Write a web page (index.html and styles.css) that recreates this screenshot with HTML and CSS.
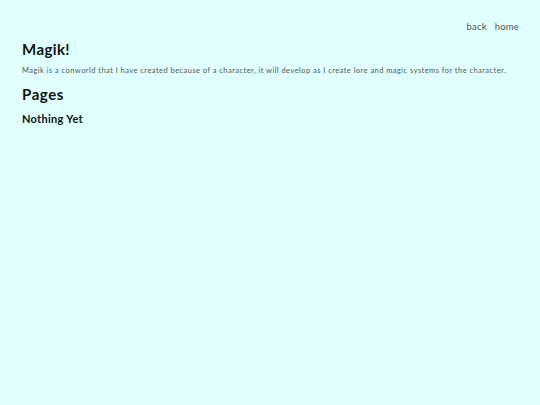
FILE: index.html
```html
<!DOCTYPE html>
<html>
<head>
<meta charset="utf-8">
<link rel="stylesheet" href="styles.css">
</head>
<body>
<nav class="nav">
  <a href="#" class="nav-link">back</a>
  <a href="#" class="nav-link">home</a>
</nav>
<main class="content">
  <h1 class="title">Magik!</h1>
  <p class="intro">Magik is a conworld that I have created because of a character, it will develop as I create lore and magic systems for the character.</p>
  <h2 class="section">Pages</h2>
  <h3 class="empty">Nothing Yet</h3>
</main>
</body>
</html>
```
FILE: styles.css
```css
html, body {
  margin: 0;
  padding: 0;
  background: #e0ffff;
}
body {
  font-family: "Lato", "Liberation Sans", sans-serif;
  color: #111;
  padding: 21px 21px 0 22px;
}
.nav {
  display: flex;
  justify-content: flex-end;
  gap: 8px;
}
.nav-link {
  color: #555;
  text-decoration: none;
  font-size: 9.5px;
  letter-spacing: 0.2px;
}
.content {
  margin-top: 8px;
}
.title {
  font-size: 15px;
  font-weight: 700;
  letter-spacing: 0.4px;
  margin: 0;
}
.intro {
  font-size: 7.5px;
  color: #555;
  letter-spacing: 0.45px;
  margin: 8px 0 0;
}
.section {
  font-size: 15px;
  font-weight: 700;
  letter-spacing: 0.6px;
  margin: 10px 0 0;
}
.empty {
  font-size: 11px;
  font-weight: 700;
  letter-spacing: 0.3px;
  margin: 9px 0 0;
}
```
